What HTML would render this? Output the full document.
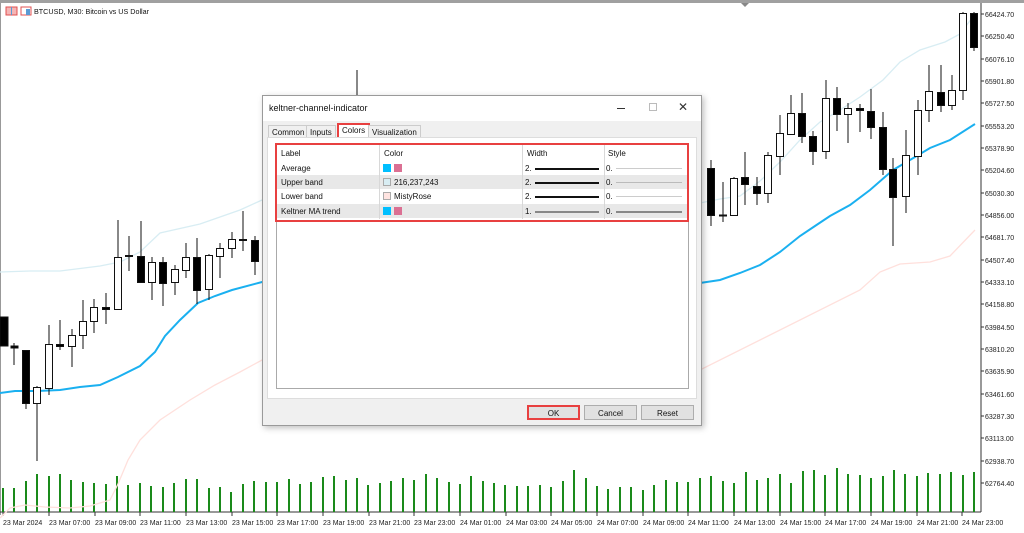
<!DOCTYPE html>
<html><head><meta charset="utf-8"><style>
*{margin:0;padding:0;box-sizing:border-box}
body{width:1024px;height:533px;background:#fff;position:relative;overflow:hidden;font-family:"Liberation Sans",sans-serif}
svg{position:absolute;left:0;top:0}
.dlg{position:absolute;left:262px;top:95px;width:440px;height:331px;background:#f0f0f0;border:1px solid #9a9a9a;box-shadow:2px 2px 6px rgba(0,0,0,.25);font-size:8px;color:#111}
.tb{position:absolute;left:0;top:0;width:100%;height:25px;background:#fff}
.tb .t{position:absolute;left:6px;top:7px;font-size:9px}
.tab{position:absolute;top:29px;height:13px;border:1px solid #ccc;background:#f0f0f0;font-size:8px;padding:2px 3px 0}
.panel{position:absolute;left:4px;top:41px;width:430px;height:262px;background:#fff;border:1px solid #ddd}
.list{position:absolute;left:8px;top:6px;width:413px;height:245px;border:1px solid #aaa;background:#fff}
.row{position:absolute;left:0;width:411px;height:14px}
.row span{position:absolute;top:3px}
.g{background:#e8e8e8}
.vd{position:absolute;top:0;width:1px;height:74px;background:#d8d8d8}
.sw{position:absolute;top:3px;width:8px;height:8px}
.ln{position:absolute;height:2px;background:#111}
.btn{position:absolute;top:309px;width:53px;height:15px;background:#e1e1e1;border:1px solid #adadad;text-align:center;font-size:8px;padding-top:3px}
</style></head><body>
<svg width="1024" height="533">
<rect x="0" y="0" width="1024" height="3" fill="#a0a0a0"/>
<rect x="0" y="3" width="1" height="512" fill="#999"/>
<polygon points="741,3 749,3 745,7" fill="#888"/>
<text x="34" y="14" font-size="7.2" font-family="Liberation Sans" fill="#111">BTCUSD, M30:  Bitcoin vs US Dollar</text>
<rect x="6" y="7" width="11" height="8" fill="#f5b5b5" stroke="#e05050" stroke-width="1"/><line x1="11.5" y1="7" x2="11.5" y2="15" stroke="#5b9bd5"/>
<rect x="21" y="7" width="10" height="8" fill="#fff" stroke="#e05050"/><rect x="26" y="9" width="4" height="6" fill="#5b9bd5"/>
<line x1="981" y1="3" x2="981" y2="512" stroke="#333"/>
<line x1="0" y1="512" x2="981" y2="512" stroke="#333"/>
<g font-size="7" font-family="Liberation Sans" fill="#222">
<text x="985" y="17">66424.70</text><text x="985" y="39">66250.40</text><text x="985" y="62">66076.10</text><text x="985" y="84">65901.80</text><text x="985" y="106">65727.50</text><text x="985" y="129">65553.20</text><text x="985" y="151">65378.90</text><text x="985" y="173">65204.60</text><text x="985" y="196">65030.30</text><text x="985" y="218">64856.00</text><text x="985" y="240">64681.70</text><text x="985" y="263">64507.40</text><text x="985" y="285">64333.10</text><text x="985" y="307">64158.80</text><text x="985" y="330">63984.50</text><text x="985" y="352">63810.20</text><text x="985" y="374">63635.90</text><text x="985" y="397">63461.60</text><text x="985" y="419">63287.30</text><text x="985" y="441">63113.00</text><text x="985" y="464">62938.70</text><text x="985" y="486">62764.40</text>
</g>
<g font-size="7" font-family="Liberation Sans" fill="#222">
<text x="3" y="525">23 Mar 2024</text><text x="49" y="525">23 Mar 07:00</text><text x="95" y="525">23 Mar 09:00</text><text x="140" y="525">23 Mar 11:00</text><text x="186" y="525">23 Mar 13:00</text><text x="232" y="525">23 Mar 15:00</text><text x="277" y="525">23 Mar 17:00</text><text x="323" y="525">23 Mar 19:00</text><text x="369" y="525">23 Mar 21:00</text><text x="414" y="525">23 Mar 23:00</text><text x="460" y="525">24 Mar 01:00</text><text x="506" y="525">24 Mar 03:00</text><text x="551" y="525">24 Mar 05:00</text><text x="597" y="525">24 Mar 07:00</text><text x="643" y="525">24 Mar 09:00</text><text x="688" y="525">24 Mar 11:00</text><text x="734" y="525">24 Mar 13:00</text><text x="780" y="525">24 Mar 15:00</text><text x="825" y="525">24 Mar 17:00</text><text x="871" y="525">24 Mar 19:00</text><text x="917" y="525">24 Mar 21:00</text><text x="962" y="525">24 Mar 23:00</text>
</g>
<path d="M3 512v4M49 512v4M95 512v4M140 512v4M186 512v4M232 512v4M277 512v4M323 512v4M369 512v4M414 512v4M460 512v4M506 512v4M551 512v4M597 512v4M643 512v4M688 512v4M734 512v4M780 512v4M825 512v4M871 512v4M917 512v4M962 512v4M981 14h3M981 36h3M981 59h3M981 81h3M981 103h3M981 126h3M981 148h3M981 170h3M981 193h3M981 215h3M981 237h3M981 260h3M981 282h3M981 304h3M981 327h3M981 349h3M981 371h3M981 394h3M981 416h3M981 438h3M981 461h3M981 483h3" stroke="#333" stroke-width="1"/>
<path stroke="#1a8a1a" stroke-width="2" d="M3 512V488M14 512V488M26 512V481M37 512V474M49 512V476M60 512V474M71 512V480M83 512V482M94 512V483M106 512V484M117 512V476M128 512V485M140 512V483M151 512V486M163 512V487M174 512V483M186 512V479M197 512V479M209 512V488M220 512V487M231 512V492M243 512V484M254 512V481M266 512V482M277 512V482M289 512V479M300 512V484M311 512V482M323 512V477M334 512V476M346 512V480M357 512V478M368 512V485M380 512V483M391 512V481M403 512V478M414 512V480M426 512V474M437 512V478M449 512V482M460 512V484M471 512V476M483 512V481M494 512V483M505 512V485M517 512V486M528 512V486M540 512V485M551 512V487M563 512V481M574 512V470M586 512V478M597 512V486M608 512V489M620 512V487M631 512V487M643 512V490M654 512V485M666 512V480M677 512V482M688 512V482M700 512V478M711 512V476M723 512V481M734 512V483M746 512V472M757 512V480M768 512V478M780 512V474M791 512V483M803 512V471M814 512V470M825 512V475M837 512V468M848 512V474M860 512V475M871 512V478M883 512V476M894 512V470M905 512V474M917 512V476M928 512V473M940 512V474M951 512V472M963 512V475M974 512V472"/>
<polyline fill="none" stroke="#d8edf3" stroke-width="1.3" points="0,272 30,271 60,271 100,266 120,262 140,252 160,233 200,224 240,210 262,200 700,203 720,199 740,196 760,181 780,162 800,140 820,122 840,110 860,97 883,80 900,62 920,50 945,42 960,34 975,14"/>
<polyline fill="none" stroke="#ffe0dc" stroke-width="1.3" points="0,518 10,508 25,505 45,507 70,508 90,506 110,500 118,484 128,460 140,440 160,420 190,400 215,385 240,372 262,360 700,370 860,290 880,272 900,264 930,262 950,256 975,230"/>
<polyline fill="none" stroke="#1ab0f0" stroke-width="2" points="0,393 15,391 37,391 60,390 80,387 100,385 118,377 140,366 155,352 165,336 180,320 198,303 215,296 232,290 262,282 700,283 720,280 740,273 760,265 780,252 800,236 815,226 830,216 850,205 870,190 893,170 910,160 930,148 950,140 975,124"/>
<g stroke="#111" stroke-width="1">
<path d="M5 317V346M14 343V365M26 350V409M37 386V461M49 325V395M60 320V350M72 329V367M83 300V349M94 299V333M106 293V324M118 220V309M129 236V271M141 221V282M152 257V300M163 257V306M175 265V295M186 243V278M197 238V304M209 254V300M220 243V278M232 232V258M243 211V251M255 236V275M357 70V95M711 160V226M723 182V222M734 177V216M745 152V205M757 177V205M768 152V203M780 115V175M791 95V135M802 93V143M813 131V165M826 80V159M837 87V131M848 103V143M860 104V132M871 89V139M883 112V175M893 158V246M906 130V213M918 100V175M929 65V122M941 65V112M952 75V110M963 12V100M974 12V51"/>
</g>
<g stroke="#111" stroke-width="1">
<rect x="0" y="317" width="8" height="29" fill="#000"/>
<rect x="11" y="346" width="7" height="2" fill="#000"/>
<rect x="22.5" y="350.5" width="7" height="53" fill="#000"/>
<rect x="33.5" y="387.5" width="7" height="16" fill="#fff"/>
<rect x="45.5" y="344.5" width="7" height="44" fill="#fff"/>
<rect x="56.5" y="344.5" width="7" height="2" fill="#000"/>
<rect x="68.5" y="335.5" width="7" height="11" fill="#fff"/>
<rect x="79.5" y="321.5" width="7" height="14" fill="#fff"/>
<rect x="90.5" y="307.5" width="7" height="14" fill="#fff"/>
<rect x="102.5" y="307.5" width="7" height="2" fill="#000"/>
<rect x="114.5" y="257.5" width="7" height="52" fill="#fff"/>
<rect x="125.5" y="255.5" width="7" height="1" fill="#000"/>
<rect x="137.5" y="256.5" width="7" height="26" fill="#000"/>
<rect x="148.5" y="262.5" width="7" height="20" fill="#fff"/>
<rect x="159.5" y="262.5" width="7" height="21" fill="#000"/>
<rect x="171.5" y="269.5" width="7" height="13" fill="#fff"/>
<rect x="182.5" y="257.5" width="7" height="13" fill="#fff"/>
<rect x="193.5" y="257.5" width="7" height="33" fill="#000"/>
<rect x="205.5" y="255.5" width="7" height="34" fill="#fff"/>
<rect x="216.5" y="248.5" width="7" height="8" fill="#fff"/>
<rect x="228.5" y="239.5" width="7" height="9" fill="#fff"/>
<rect x="239.5" y="239.5" width="7" height="1" fill="#000"/>
<rect x="251.5" y="240.5" width="7" height="21" fill="#000"/>
<rect x="707.5" y="168.5" width="7" height="47" fill="#000"/>
<rect x="719.5" y="215" width="7" height="1" fill="#000"/>
<rect x="730.5" y="178.5" width="7" height="37" fill="#fff"/>
<rect x="741.5" y="177.5" width="7" height="7" fill="#000"/>
<rect x="753.5" y="186.5" width="7" height="7" fill="#000"/>
<rect x="764.5" y="155.5" width="7" height="38" fill="#fff"/>
<rect x="776.5" y="133.5" width="7" height="23" fill="#fff"/>
<rect x="787.5" y="113.5" width="7" height="21" fill="#fff"/>
<rect x="798.5" y="113.5" width="7" height="23" fill="#000"/>
<rect x="809.5" y="136.5" width="7" height="15" fill="#000"/>
<rect x="822.5" y="98.5" width="7" height="53" fill="#fff"/>
<rect x="833.5" y="98.5" width="7" height="16" fill="#000"/>
<rect x="844.5" y="108.5" width="7" height="6" fill="#fff"/>
<rect x="856.5" y="108.5" width="7" height="2" fill="#000"/>
<rect x="867.5" y="111.5" width="7" height="16" fill="#000"/>
<rect x="879.5" y="127.5" width="7" height="42" fill="#000"/>
<rect x="889.5" y="169.5" width="7" height="28" fill="#000"/>
<rect x="902.5" y="155.5" width="7" height="41" fill="#fff"/>
<rect x="914.5" y="110.5" width="7" height="46" fill="#fff"/>
<rect x="925.5" y="91.5" width="7" height="19" fill="#fff"/>
<rect x="937.5" y="92.5" width="7" height="13" fill="#000"/>
<rect x="948.5" y="90.5" width="7" height="15" fill="#fff"/>
<rect x="959.5" y="13.5" width="7" height="77" fill="#fff"/>
<rect x="970.5" y="13.5" width="7" height="34" fill="#000"/>
</g>
</svg>

<div class="dlg">
 <div class="tb"><div class="t">keltner-channel-indicator</div>
  <div style="position:absolute;left:354px;top:12px;width:8px;height:1px;background:#333"></div>
  <div style="position:absolute;left:386px;top:7px;width:8px;height:8px;border:1px solid #bbb"></div>
  <div style="position:absolute;left:415px;top:4px;font-size:12px;color:#333">✕</div>
 </div>
 <div class="tab" style="left:5px">Common</div>
 <div class="tab" style="left:43px">Inputs</div>
 <div class="tab" style="left:74px;top:27px;height:16px;background:#fff;border:2px solid #e84040;padding-top:1px">Colors</div>
 <div class="tab" style="left:105px">Visualization</div>
 <div class="panel">
  <div class="list">
   <div style="position:absolute;left:-2px;top:-2px;width:414px;height:79px;border:2px solid #e84040;z-index:3"></div>
   <div class="row" style="top:1px"><span style="left:4px">Label</span><span style="left:107px">Color</span><span style="left:250px">Width</span><span style="left:331px">Style</span></div>
   <div class="row" style="top:16px"><span style="left:4px">Average</span><div class="sw" style="left:106px;background:#00bfff"></div><div class="sw" style="left:117px;background:#db7093"></div><span style="left:248px">2.</span><div class="ln" style="left:258px;top:7px;width:64px"></div><span style="left:329px">0.</span><div class="ln" style="left:339px;top:7px;width:66px;height:1px;background:#ccc"></div></div>
   <div class="row g" style="top:30px"><span style="left:4px">Upper band</span><div class="sw" style="left:106px;background:#d8edf3;border:1px solid #aaa"></div><span style="left:117px">216,237,243</span><span style="left:248px">2.</span><div class="ln" style="left:258px;top:7px;width:64px"></div><span style="left:329px">0.</span><div class="ln" style="left:339px;top:7px;width:66px;height:1px;background:#bbb"></div></div>
   <div class="row" style="top:44px"><span style="left:4px">Lower band</span><div class="sw" style="left:106px;background:#ffe4e1;border:1px solid #aaa"></div><span style="left:117px">MistyRose</span><span style="left:248px">2.</span><div class="ln" style="left:258px;top:7px;width:64px"></div><span style="left:329px">0.</span><div class="ln" style="left:339px;top:7px;width:66px;height:1px;background:#ccc"></div></div>
   <div class="row g" style="top:59px"><span style="left:4px">Keltner MA trend</span><div class="sw" style="left:106px;background:#00bfff"></div><div class="sw" style="left:117px;background:#db7093"></div><span style="left:248px">1.</span><div class="ln" style="left:258px;top:7px;width:64px;background:#888"></div><span style="left:329px">0.</span><div class="ln" style="left:339px;top:7px;width:66px;background:#888"></div></div>
   <div class="vd" style="left:102px"></div><div class="vd" style="left:245px"></div><div class="vd" style="left:327px"></div>
  </div>
 </div>
 <div class="btn" style="left:264px;border:2px solid #e84040;padding-top:2px">OK</div>
 <div class="btn" style="left:321px">Cancel</div>
 <div class="btn" style="left:378px">Reset</div>
</div>
</body></html>
